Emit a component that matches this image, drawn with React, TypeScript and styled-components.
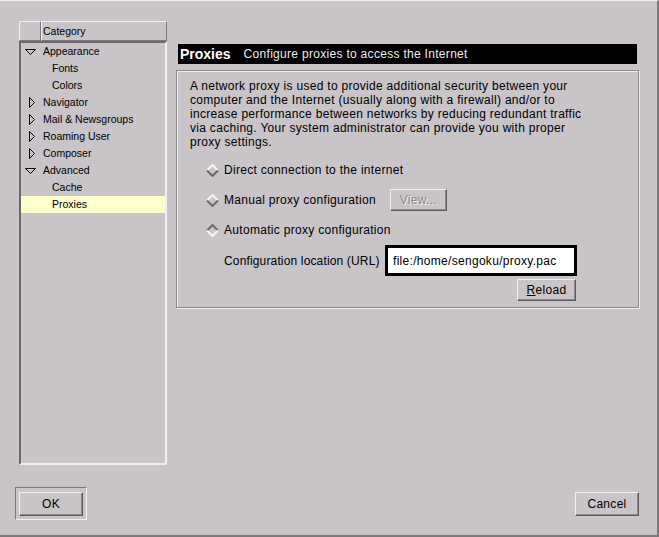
import React from "react";
import styled, { createGlobalStyle } from "styled-components";

const BG = "#c8c4c8";
const LIGHT = "#f2eef2";
const DARK = "#7c787c";
const DARKER = "#5c585c";

const GlobalStyle = createGlobalStyle`
  html, body {
    margin: 0;
    padding: 0;
    background: ${BG};
  }
  body {
    font-family: "Liberation Sans", Arial, sans-serif;
    font-size: 12px;
    letter-spacing: 0.3px;
    color: #000;
  }
`;

type TreeItem = {
  label: string;
  level: number;
  twisty?: "open" | "closed";
  selected?: boolean;
};

const treeItems: TreeItem[] = [
  { label: "Appearance", level: 0, twisty: "open" },
  { label: "Fonts", level: 1 },
  { label: "Colors", level: 1 },
  { label: "Navigator", level: 0, twisty: "closed" },
  { label: "Mail & Newsgroups", level: 0, twisty: "closed" },
  { label: "Roaming User", level: 0, twisty: "closed" },
  { label: "Composer", level: 0, twisty: "closed" },
  { label: "Advanced", level: 0, twisty: "open" },
  { label: "Cache", level: 1 },
  { label: "Proxies", level: 1, selected: true },
];

function Twisty({ open }: { open: boolean }) {
  return (
    <TwistyBox width="22" height="17" viewBox="0 0 22 17">
      {open ? (
        <polygon points="4.5,6.5 14.5,6.5 9.5,11.5" fill="none" stroke="#000" />
      ) : (
        <polygon points="8.5,3.5 13.5,8.5 8.5,13.5" fill="none" stroke="#000" />
      )}
    </TwistyBox>
  );
}

function Diamond({ checked }: { checked?: boolean }) {
  const up = checked ? "#6c686c" : "#f8f6f8";
  const down = checked ? "#f8f6f8" : "#6c686c";
  return (
    <DiamondBox width="13" height="13" viewBox="0 0 13 13">
      <polyline points="1,6.5 6.5,1 12,6.5" fill="none" stroke={up} strokeWidth="2" />
      <polyline points="1,6.5 6.5,12 12,6.5" fill="none" stroke={down} strokeWidth="2" />
    </DiamondBox>
  );
}

export default function App() {
  return (
    <>
      <GlobalStyle />
      <Window>
        <Main>
          <Tree>
            <TreeHeader>
              <HeaderCell $width="22px" />
              <HeaderCell $grow>Category</HeaderCell>
            </TreeHeader>
            <TreeBody>
              {treeItems.map((item) => (
                <TreeRow key={item.label} $selected={item.selected} $level={item.level}>
                  {item.twisty && <Twisty open={item.twisty === "open"} />}
                  <RowText>{item.label}</RowText>
                </TreeRow>
              ))}
            </TreeBody>
          </Tree>

          <Panel>
            <PanelHeader>
              <Title>Proxies</Title>
              <Subtitle>Configure proxies to access the Internet</Subtitle>
            </PanelHeader>
            <GroupBox>
              <Intro>
                A network proxy is used to provide additional security between your
                <br />
                computer and the Internet (usually along with a firewall) and/or to
                <br />
                increase performance between networks by reducing redundant traffic
                <br />
                via caching. Your system administrator can provide you with proper
                <br />
                proxy settings.
              </Intro>
              <Options>
                <OptionRow>
                  <Diamond />
                  Direct connection to the internet
                </OptionRow>
                <OptionRow>
                  <Diamond />
                  Manual proxy configuration
                  <ViewButton disabled>View...</ViewButton>
                </OptionRow>
                <OptionRow>
                  <Diamond checked />
                  Automatic proxy configuration
                </OptionRow>
                <ConfigGrid>
                  <ConfigLabel>Configuration location (URL)</ConfigLabel>
                  <UrlInput readOnly value="file:/home/sengoku/proxy.pac" />
                  <ReloadButton>
                    <u>R</u>eload
                  </ReloadButton>
                </ConfigGrid>
              </Options>
            </GroupBox>
          </Panel>
        </Main>

        <Footer>
          <DefaultFrame>
            <Button>OK</Button>
          </DefaultFrame>
          <Button>Cancel</Button>
        </Footer>
      </Window>
    </>
  );
}

const Window = styled.div`
  box-sizing: border-box;
  width: 659px;
  height: 537px;
  background: ${BG};
  border-top: 1px solid ${LIGHT};
  border-right: 2px solid ${DARK};
  border-bottom: 2px solid ${DARK};
  padding: 20px 18px 0 15px;
  display: flex;
  flex-direction: column;
`;

const Main = styled.div`
  display: flex;
  align-items: flex-start;
  padding-left: 4px;
`;

const Tree = styled.div`
  width: 148px;
  height: 444px;
  display: flex;
  flex-direction: column;
  font-size: 10.5px;
  letter-spacing: 0;
`;

const TreeHeader = styled.div`
  display: flex;
  height: 20px;
`;

const HeaderCell = styled.div<{ $width?: string; $grow?: boolean }>`
  box-sizing: border-box;
  width: ${(p) => p.$width || "auto"};
  flex: ${(p) => (p.$grow ? 1 : "none")};
  border-top: 1px solid ${LIGHT};
  border-left: 1px solid ${LIGHT};
  border-right: 1px solid ${DARK};
  border-bottom: 1px solid ${DARK};
  padding: 0 0 1px 1px;
  display: flex;
  align-items: center;
`;

const TreeBody = styled.div`
  box-sizing: border-box;
  flex: 1;
  border-top: 2px solid #6c686c;
  border-left: 2px solid #6c686c;
  border-right: 2px solid ${LIGHT};
  border-bottom: 2px solid ${LIGHT};
`;

const TreeRow = styled.div<{ $selected?: boolean; $level: number }>`
  height: 17px;
  display: flex;
  align-items: center;
  padding-left: ${(p) => (p.$level > 0 ? "31px" : "0")};
  background: ${(p) => (p.$selected ? "#ffffcc" : "transparent")};
  white-space: nowrap;
`;

const RowText = styled.span`
  margin-top: -1px;
`;

const TwistyBox = styled.svg`
  flex: none;
  display: block;
`;

const Panel = styled.div`
  margin-left: 9px;
  margin-top: 23px;
  width: 463px;
  display: flex;
  flex-direction: column;
`;

const PanelHeader = styled.div`
  margin: 0 2px;
  height: 20px;
  background: #000;
  display: flex;
  align-items: center;
  padding-left: 2px;
`;

const Title = styled.span`
  font-size: 14px;
  font-weight: bold;
  letter-spacing: 0;
  color: #fff;
`;

const Subtitle = styled.span`
  margin-left: 13px;
  font-size: 12px;
  color: #ecebec;
`;

const GroupBox = styled.div`
  margin-top: 6px;
  border: 1px solid #8c888c;
  box-shadow: inset 1px 1px 0 ${LIGHT}, 1px 1px 0 ${LIGHT};
  padding: 8px 0 6px 13px;
`;

const Intro = styled.p`
  margin: 0;
  line-height: 14px;
  white-space: nowrap;
`;

const Options = styled.div`
  margin-top: 10px;
  padding-left: 16px;
  display: flex;
  flex-direction: column;
  gap: 8px;
`;

const OptionRow = styled.div`
  height: 22px;
  display: flex;
  align-items: center;
`;

const DiamondBox = styled.svg`
  display: block;
  margin-right: 5px;
`;

const ConfigGrid = styled.div`
  margin-top: -4px;
  padding-left: 18px;
  display: grid;
  grid-template-columns: 157px 192px;
  column-gap: 4px;
  row-gap: 3px;
  align-items: center;
`;

const ConfigLabel = styled.span`
  white-space: nowrap;
  letter-spacing: 0.15px;
`;

const UrlInput = styled.input`
  box-sizing: border-box;
  width: 192px;
  height: 31px;
  border: 3px solid #000;
  background: #fff;
  padding: 0 0 0 5px;
  margin: 0;
  font: inherit;
  font-size: 12px;
  letter-spacing: 0.3px;
  color: #000;
  outline: none;
`;

const Button = styled.button`
  box-sizing: border-box;
  width: 64px;
  height: 24px;
  margin: 0;
  padding: 0;
  background: ${BG};
  border-top: 1px solid ${LIGHT};
  border-left: 1px solid ${LIGHT};
  border-right: 1px solid ${DARKER};
  border-bottom: 1px solid ${DARKER};
  box-shadow: inset -1px -1px 0 #8c888c;
  font: inherit;
  font-size: 12px;
  letter-spacing: 0.3px;
  color: #000;
  display: flex;
  align-items: center;
  justify-content: center;
`;

const ViewButton = styled(Button)`
  width: 57px;
  height: 22px;
  margin-left: 14px;
  color: #8c888c;
  text-shadow: 1px 1px 0 ${LIGHT};
`;

const ReloadButton = styled(Button)`
  grid-column: 2;
  justify-self: end;
  margin-right: 1px;
  width: 59px;
  height: 22px;
`;

const Footer = styled.div`
  margin-top: 22px;
  display: flex;
  justify-content: space-between;
  align-items: center;
`;

const DefaultFrame = styled.div`
  border-top: 1px solid ${DARK};
  border-left: 1px solid ${DARK};
  border-right: 1px solid ${LIGHT};
  border-bottom: 1px solid ${LIGHT};
  padding: 4px 3px 3px 3px;
  display: flex;
`;
